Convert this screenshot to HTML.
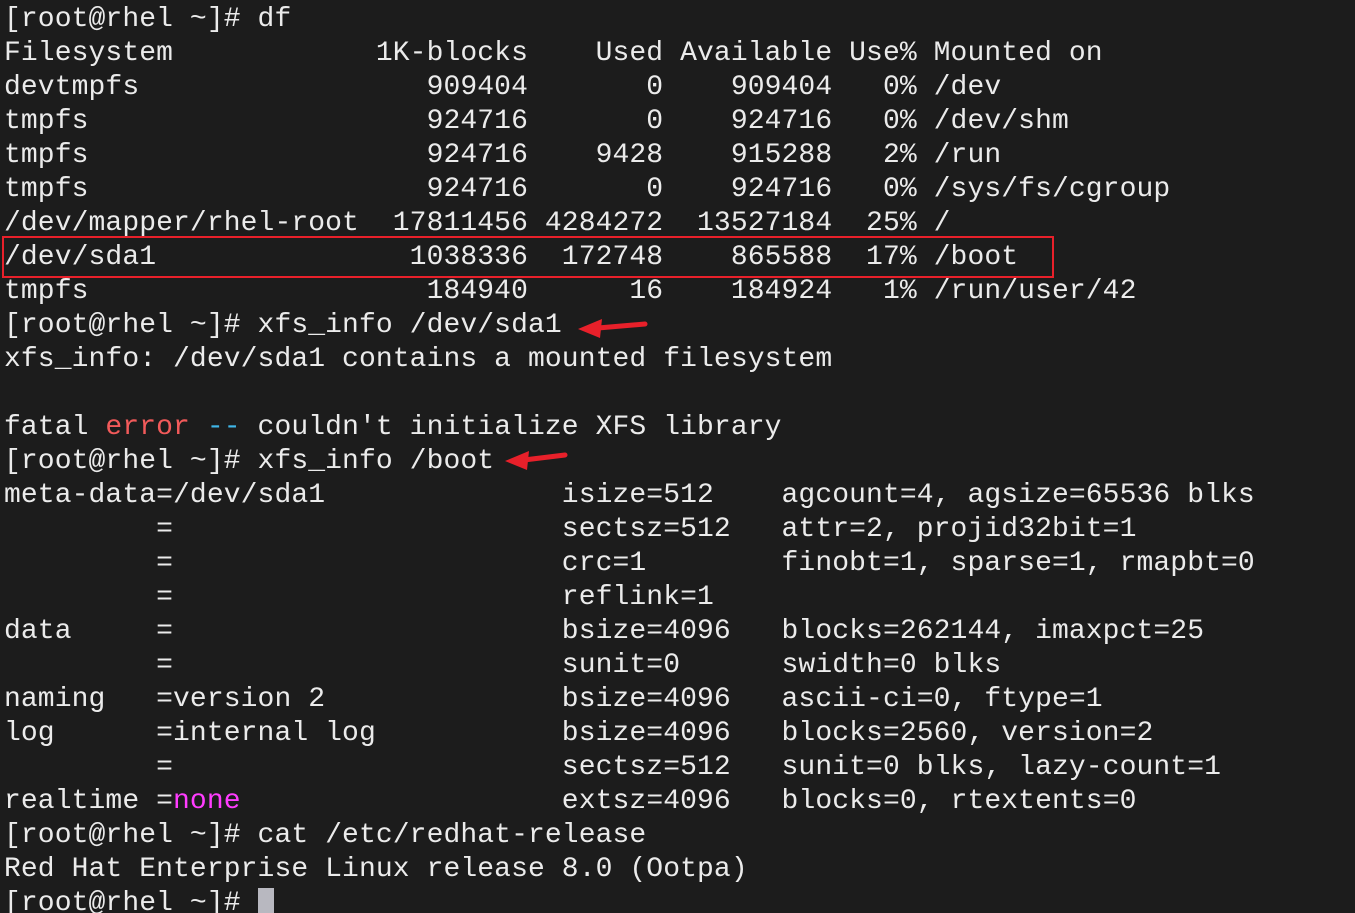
<!DOCTYPE html>
<html><head><meta charset="utf-8"><style>
html,body{margin:0;padding:0;background:#1c1c1c;width:1355px;height:913px;overflow:hidden;}
pre{margin:0;padding:3px 0 0 4px;font-family:"Liberation Mono",monospace;font-size:28px;line-height:34px;color:#ebebeb;letter-spacing:0.1px;}
.r{color:#f25a5a}.b{color:#3fb6e8}.m{color:#ff3cff}
.cur{display:inline-block;width:16px;height:28px;background:#b8b8c0;vertical-align:-6px}
.box{position:absolute;left:2px;top:236px;width:1048px;height:38px;border:2.5px solid #e8202a;}
svg{position:absolute;left:0;top:0}
</style></head><body>
<pre>[root@rhel ~]# df
Filesystem            1K-blocks    Used Available Use% Mounted on
devtmpfs                 909404       0    909404   0% /dev
tmpfs                    924716       0    924716   0% /dev/shm
tmpfs                    924716    9428    915288   2% /run
tmpfs                    924716       0    924716   0% /sys/fs/cgroup
/dev/mapper/rhel-root  17811456 4284272  13527184  25% /
/dev/sda1               1038336  172748    865588  17% /boot
tmpfs                    184940      16    184924   1% /run/user/42
[root@rhel ~]# xfs_info /dev/sda1
xfs_info: /dev/sda1 contains a mounted filesystem

fatal <span class="r">error</span> <span class="b">--</span> couldn't initialize XFS library
[root@rhel ~]# xfs_info /boot
meta-data=/dev/sda1              isize=512    agcount=4, agsize=65536 blks
         =                       sectsz=512   attr=2, projid32bit=1
         =                       crc=1        finobt=1, sparse=1, rmapbt=0
         =                       reflink=1
data     =                       bsize=4096   blocks=262144, imaxpct=25
         =                       sunit=0      swidth=0 blks
naming   =version 2              bsize=4096   ascii-ci=0, ftype=1
log      =internal log           bsize=4096   blocks=2560, version=2
         =                       sectsz=512   sunit=0 blks, lazy-count=1
realtime =<span class="m">none</span>                   extsz=4096   blocks=0, rtextents=0
[root@rhel ~]# cat /etc/redhat-release
Red Hat Enterprise Linux release 8.0 (Ootpa)
[root@rhel ~]# <span class="cur"></span></pre>
<div class="box"></div>
<svg width="1355" height="913">
<path d="M645 324 L598 328" stroke="#e8202a" stroke-width="5" stroke-linecap="round"/>
<path d="M578 329 L602 319 L600 338 Z" fill="#e8202a"/>
<path d="M565 455 L524 460" stroke="#e8202a" stroke-width="5" stroke-linecap="round"/>
<path d="M505 461 L529 451 L527 470 Z" fill="#e8202a"/>
</svg>
</body></html>
